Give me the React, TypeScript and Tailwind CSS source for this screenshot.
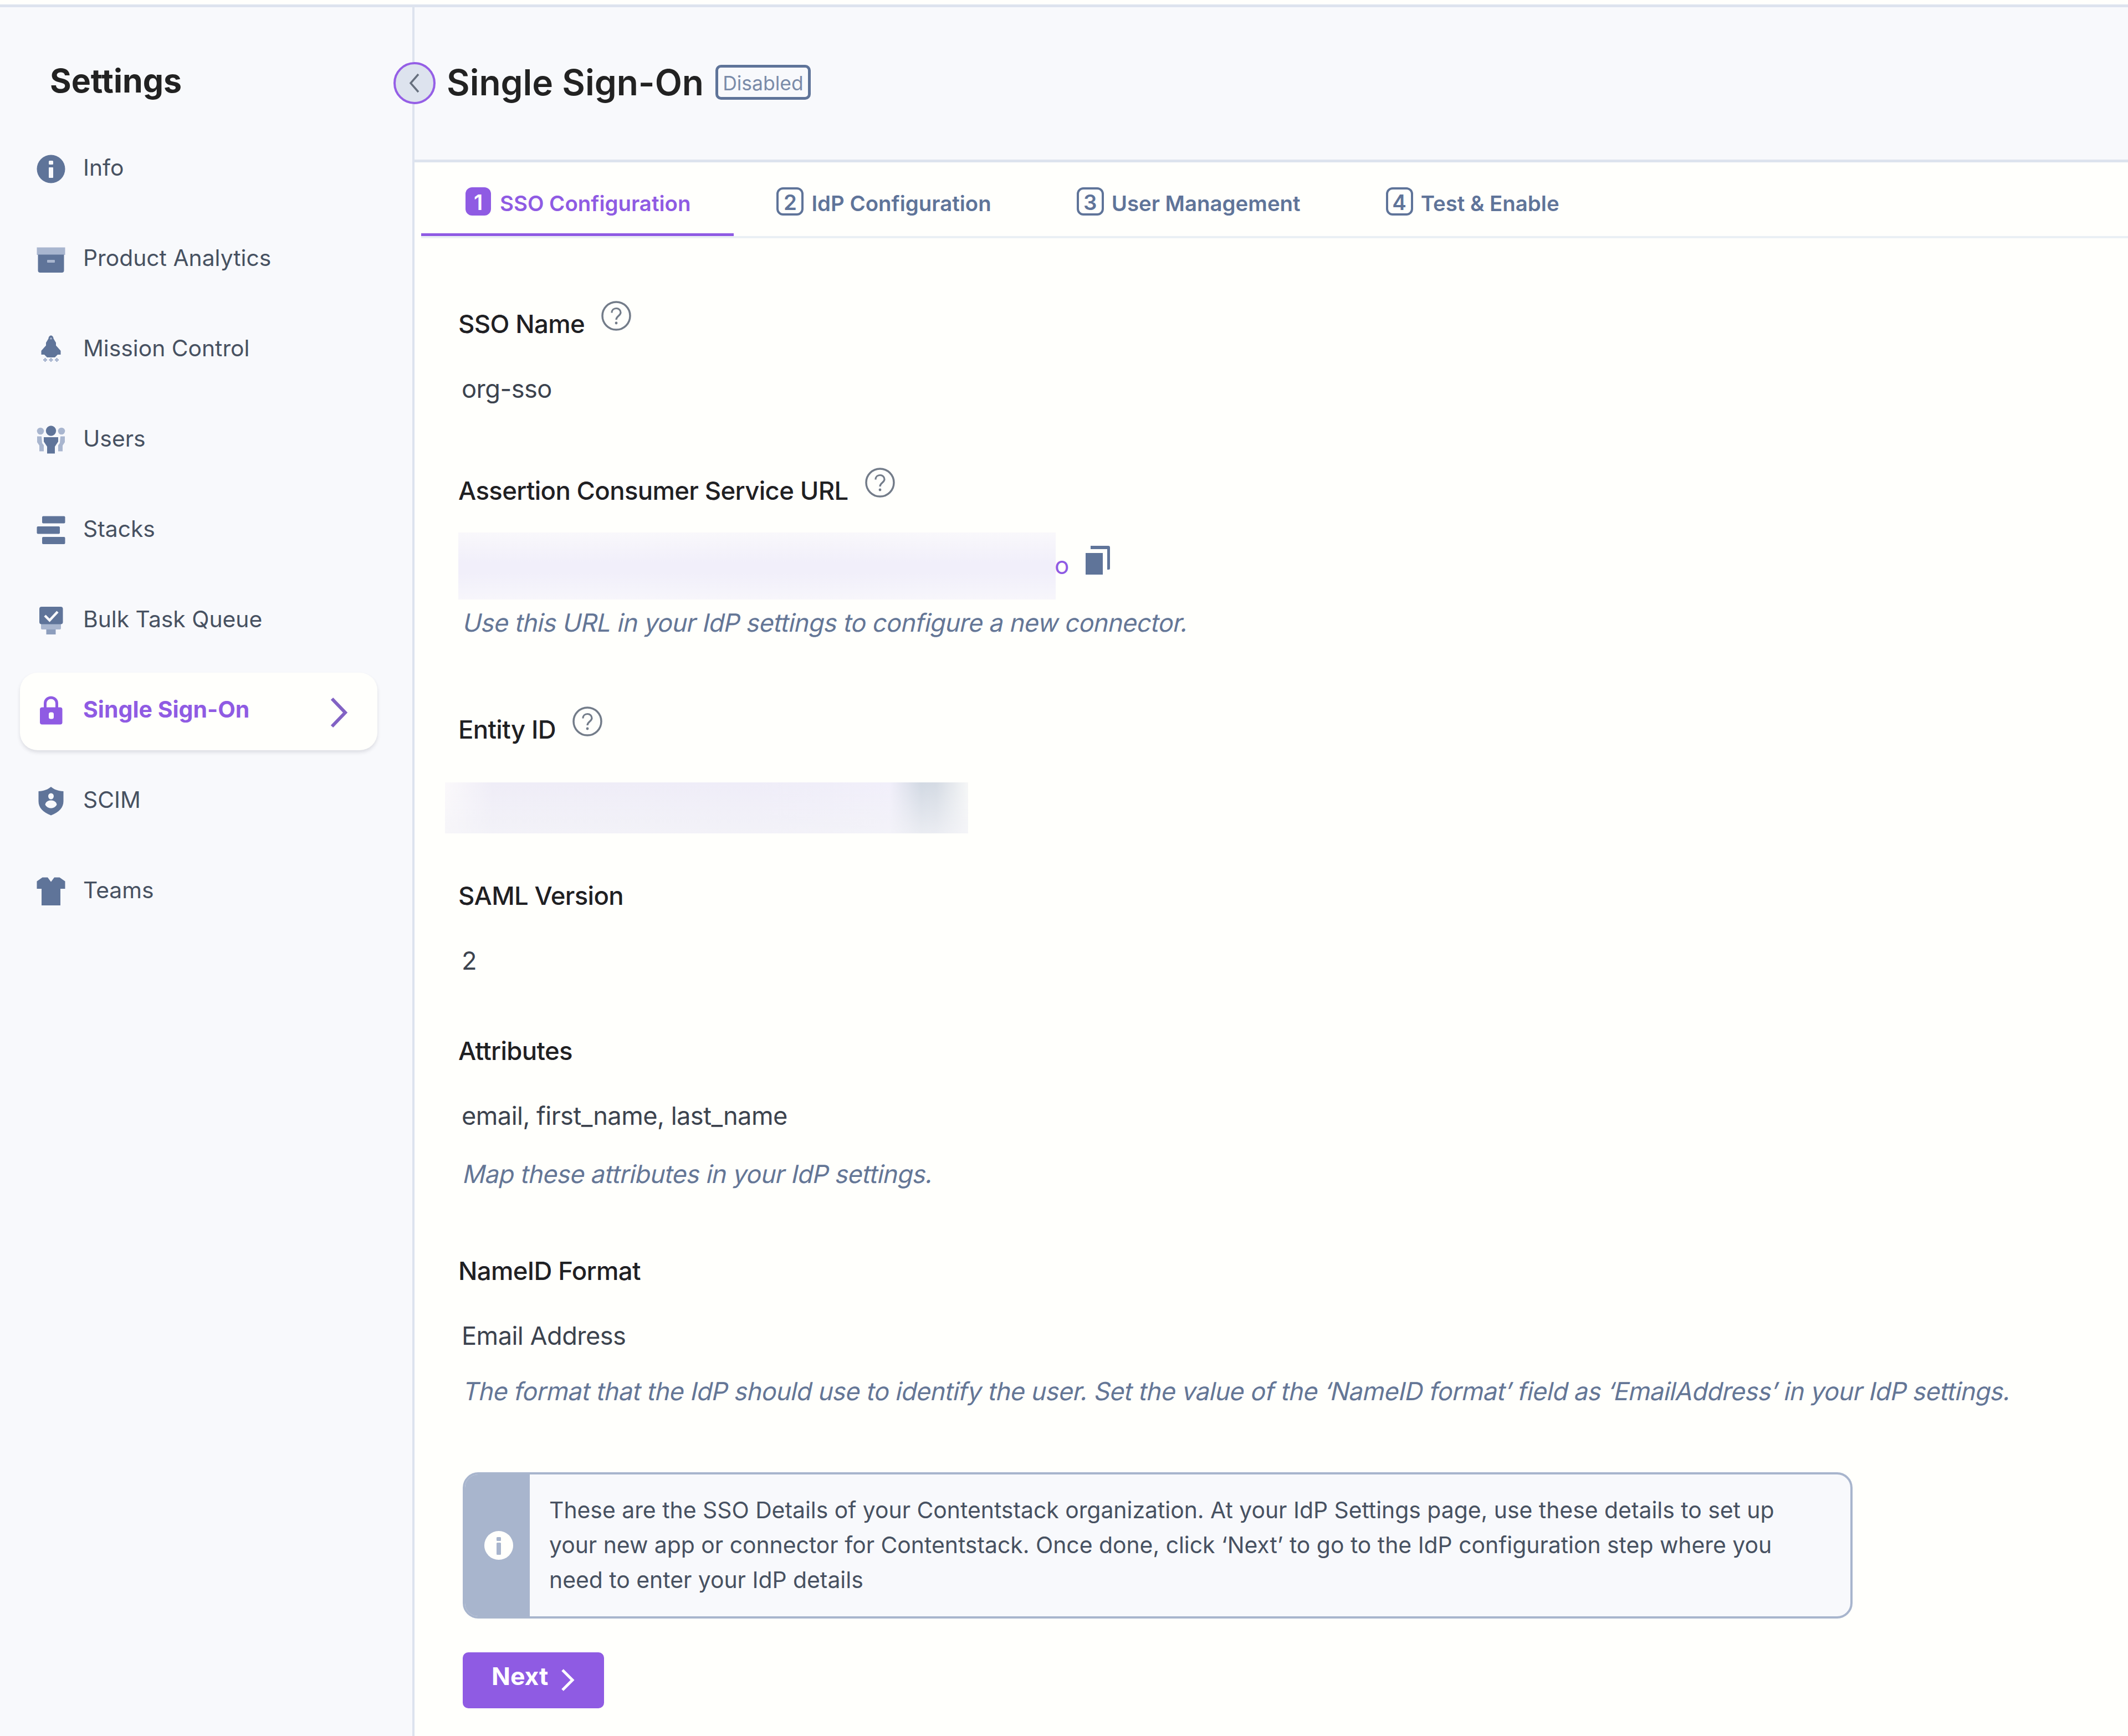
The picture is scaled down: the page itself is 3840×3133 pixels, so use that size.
import { type ReactNode } from 'react'

const slate = '#5f7499'
const pale = '#a9b6cf'

const icons: Record<string, ReactNode> = {
  info: (
    <>
      <circle cx="28" cy="27" r="25.5" fill={slate} />
      <rect x="24" y="12" width="8" height="7" rx="1.5" fill="#f8f9fc" />
      <rect x="24" y="24" width="8" height="19" rx="1" fill="#f8f9fc" />
    </>
  ),
  analytics: (
    <>
      <path d="M2.5 5.5h51V19h-51z" fill={pale} />
      <path d="M4.5 18.5h47V47a4 4 0 0 1-4 4h-39a4 4 0 0 1-4-4z" fill={slate} />
      <rect x="21" y="28" width="14" height="5" rx="1" fill={pale} />
    </>
  ),
  mission: (
    <>
      <path
        d="M28 1.5c2.5 0 4.5 2.5 4.5 5.5l4.500 7.500v5l8.500 9.500v7h-5.500L35 41H21l-5-5h-5.500v-7l8.500-9.500v-5l4.500-7.500c0-3 2-5.500 4.500-5.500z"
        fill={slate}
      />
      <circle cx="28" cy="7" r="1.8" fill={pale} />
      <path d="M17.5 42v7M28 42v7M38.5 42v7M14 45.5h7M24.5 45.5h7M35 45.5h7" stroke={pale} strokeWidth="2.8" />
    </>
  ),
  users: (
    <>
      <circle cx="28" cy="10.5" r="9.2" fill={slate} />
      <path d="M15 22h26v8l-6 9v12.5H21V39l-6-9z" fill={slate} />
      <circle cx="9" cy="11" r="6.3" fill={pale} />
      <circle cx="47" cy="11" r="6.3" fill={pale} />
      <path d="M3 20.5h8l1 12 3 4v11H7V37l-4-6zM53 20.5h-8l-1 12-3 4v11h8V37l4-6z" fill={pale} />
    </>
  ),
  stacks: (
    <>
      <rect x="12" y="1.5" width="41.5" height="13" rx="2" fill={slate} />
      <rect x="2.5" y="20" width="41.5" height="13.5" rx="2" fill={slate} />
      <rect x="12" y="39" width="41.5" height="13" rx="2" fill={slate} />
    </>
  ),
  queue: (
    <>
      <path d="M10 33h36v8a2 2 0 0 1-2 2H12a2 2 0 0 1-2-2z" fill={pale} />
      <rect x="19.5" y="43" width="17" height="9" fill="#8d9ebd" />
      <rect x="7" y="2" width="42.5" height="31.5" rx="4" fill={slate} />
      <path d="m17 18 8.5 8.5L40 11" fill="none" stroke="#f8f9fc" strokeWidth="4.5" />
    </>
  ),
  lock: (
    <>
      <path d="M17.5 23V13a10.5 10 0 0 1 21 0v10" fill="none" stroke="#8f5be3" strokeWidth="5" />
      <rect x="8" y="20.5" width="40.5" height="31" rx="4" fill="#8f5be3" />
      <rect x="24" y="29.5" width="9" height="12" rx="3.5" fill="#fffffc" />
    </>
  ),
  scim: (
    <>
      <path d="M28 1c5 4.5 13 7.5 22.5 8v18c0 11.5-8 20-22.5 25.5C13.5 47 5.5 38.5 5.5 27V9C15 8.5 23 5.5 28 1z" fill={slate} />
      <ellipse cx="28" cy="18" rx="5" ry="5.5" fill="#f8f9fc" />
      <path d="M17.5 33c1-5 5-7.5 10.5-7.5s9.5 2.5 10.5 7.5c-2 4-5.5 6.5-10.5 6.5S19.5 37 17.5 33z" fill="#f8f9fc" />
    </>
  ),
  teams: <path d="M12.5 1.5H22l6 8 6-8h9.5l10 7V22H45v30H11V22H2.5V8.5z" fill={slate} />,
}

const navItems = [
  { label: 'Info', icon: 'info' },
  { label: 'Product Analytics', icon: 'analytics' },
  { label: 'Mission Control', icon: 'mission' },
  { label: 'Users', icon: 'users' },
  { label: 'Stacks', icon: 'stacks' },
  { label: 'Bulk Task Queue', icon: 'queue' },
  { label: 'Single Sign-On', icon: 'lock', active: true },
  { label: 'SCIM', icon: 'scim' },
  { label: 'Teams', icon: 'teams' },
]

const steps = ['SSO Configuration', 'IdP Configuration', 'User Management', 'Test & Enable']

function NavItem({ label, icon, active }: { label: string; icon: string; active?: boolean }) {
  return (
    <a
      className={`flex h-[140px] items-center rounded-[32px] pl-7 pr-[52px] ${
        active
          ? 'bg-[#fffffc] text-[41px] font-bold text-[#8f5be3] shadow-[0_4px_6px_rgba(60,60,80,0.14)]'
          : 'text-[40.8px] text-[#475161]'
      }`}
    >
      <svg viewBox="0 0 56 56" className="size-14 shrink-0">{icons[icon]}</svg>
      <span className="ml-[30px] grow pb-2 leading-[56px]">{label}</span>
      {active && (
        <svg viewBox="0 0 34 56" className="mt-1 h-14 w-[34px]" fill="none" stroke="#8262c4" strokeWidth="6">
          <path d="M4 3l24 25L4 53" />
        </svg>
      )}
    </a>
  )
}

function Sidebar() {
  return (
    <aside className="relative w-[748px] shrink-0 border-r-4 border-[#dde3ee] bg-[#f8f9fc]">
      <h2 className="px-[90px] pt-[97px] text-[59px] leading-[72px] font-bold text-[#222]">Settings</h2>
      <nav className="mt-[54px] flex flex-col gap-[23px] pl-9 pr-[63px]">
        {navItems.map(item => (
          <NavItem key={item.label} {...item} />
        ))}
      </nav>
      {/* collapse toggle sits on the divider */}
      <button className="absolute top-[99px] -right-[42px] z-10 flex size-[76px] items-center justify-center rounded-full border-4 border-[#955fe6] bg-[#dde3ee]">
        <svg viewBox="0 0 20 36" className="h-9 w-5" fill="none" stroke="#67707e" strokeWidth="3.5">
          <path d="M17 2L3 18l14 16" />
        </svg>
      </button>
    </aside>
  )
}

function Steps() {
  return (
    <div className="pl-3">
      <div className="flex h-[137px] border-b-4 border-[#eaf0f4]">
        {steps.map((step, i) => (
          <div
            key={step}
            className={`flex h-[133px] pt-[45px] text-[38.4px] font-semibold ${
              i === 0 ? 'border-b-5 border-[#8f5be3] px-20 pr-[78px] text-[#8f5be3]' : 'px-[77px] text-[#5f7499]'
            }`}
          >
            <span
              className={`flex h-[51px] items-center justify-center rounded-[12px] pt-1 ${
                i === 0 ? 'w-[46px] bg-[#8f5be3] text-white' : 'w-[49px] border-4 border-[#5f7499]'
              }`}
            >
              {i + 1}
            </span>
            <span className={`pt-1 leading-[51px] whitespace-nowrap ${i === 0 ? 'ml-4' : 'ml-[14px]'}`}>{step}</span>
          </div>
        ))}
      </div>
    </div>
  )
}

function HelpIcon() {
  return (
    <svg viewBox="0 0 54 54" className="-mt-[14px] ml-[30px] size-[54px]" fill="none" stroke="#737c89">
      <circle cx="27" cy="27" r="25" strokeWidth="3.5" />
      <path d="M19 21.5c0-5 3.5-8 8-8s8 3 8 7.5c0 6-8 6-8 13" strokeWidth="3.2" />
      <circle cx="27" cy="40" r="2.4" fill="#737c89" stroke="none" />
    </svg>
  )
}

function Label({ children, help }: { children: ReactNode; help?: boolean }) {
  return (
    <div className="flex h-14 items-start">
      <h3 className="text-[45.5px] leading-[56px] font-medium tracking-[-0.65px] text-[#1f2023]">{children}</h3>
      {help && <HelpIcon />}
    </div>
  )
}

function Value({ children }: { children: ReactNode }) {
  return (
    <p className="mt-[61px] pl-[6px] text-[45.2px] leading-[56px] tracking-[-0.55px] text-[#3c434e]">{children}</p>
  )
}

function Hint({ children }: { children: ReactNode }) {
  return (
    <p className="ml-[10px] w-fit -skew-x-12 text-[45px] leading-[56px] tracking-[-0.51px] whitespace-nowrap text-[#647696]">
      {children}
    </p>
  )
}

function CopyIcon() {
  return (
    <svg viewBox="0 0 45 52" className="mt-6 ml-[29px] h-[52px] w-[45px]" fill="#5f7499">
      <path d="M1 13h31v39H1z" />
      <path d="M10 0h32a3 3 0 0 1 3 3v38a2 2 0 0 1-2 2h-3V6H10z" />
    </svg>
  )
}

function Details() {
  return (
    <main className="pt-[127px] pl-[79px]">
      <Label help>SSO Name</Label>
      <Value>org-sso</Value>

      <div className="h-[128px]" />
      <Label help>Assertion Consumer Service URL</Label>
      <div className="mt-[47px] flex h-[121px]">
        <div className="w-[1078px] bg-[linear-gradient(to_bottom,#f9f8fb,#f1effa_45%,#f1effa_60%,#f7f6fb)]" />
        <span className="-ml-0.5 pt-[31px] text-[44px] leading-[56px] text-[#8f5be3]">o</span>
        <CopyIcon />
      </div>
      <div className="h-[14px]" />
      <Hint>Use this URL in your IdP settings to configure a new connector.</Hint>

      <div className="h-[137px]" />
      <Label help>Entity ID</Label>
      <div className="mt-[67px] -ml-6 h-[92px] w-[944px] bg-[linear-gradient(to_bottom,rgba(244,242,250,0),rgba(244,244,248,0.7)),linear-gradient(to_right,#fbf9fb,#efedf7_9%,#efedf8_60%,#f1effa_85%,#d2d9e3_91%,#d5dbe4_94%,#f6f7f7)]" />

      <div className="h-[85px]" />
      <Label>SAML Version</Label>
      <Value>2</Value>

      <div className="h-[107px]" />
      <Label>Attributes</Label>
      <Value>email, first_name, last_name</Value>
      <div className="h-[49px]" />
      <Hint>Map these attributes in your IdP settings.</Hint>

      <div className="h-[119px]" />
      <Label>NameID Format</Label>
      <Value>Email Address</Value>
      <div className="h-[44px]" />
      <Hint>
        The format that the IdP should use to identify the user. Set the value of the ‘NameID format’ field as
        ‘EmailAddress’ in your IdP settings.
      </Hint>

      <div className="mt-[118px] ml-2 flex h-[264px] w-[2508px] overflow-hidden rounded-[28px] border-4 border-[#a8b5cd] bg-[#f8f9fc]">
        <div className="flex w-[117px] shrink-0 items-center justify-center bg-[#a8b5cd]">
          <svg viewBox="0 0 54 54" className="ml-1 size-[54px]">
            <circle cx="27" cy="27" r="26" fill="#fffffc" />
            <rect x="23" y="12" width="8" height="7" rx="1.5" fill="#a8b5cd" />
            <rect x="23" y="22" width="8" height="22" rx="1.5" fill="#a8b5cd" />
          </svg>
        </div>
        <p className="pt-[33px] pl-[35px] text-[40.9px] leading-[63px] tracking-[-0.02px] whitespace-nowrap text-[#475161]">
          These are the SSO Details of your Contentstack organization. At your IdP Settings page, use these details to
          set up
          <br />
          your new app or connector for Contentstack. Once done, click ‘Next’ to go to the IdP configuration step where
          you
          <br />
          need to enter your IdP details
        </p>
      </div>

      <button className="mt-[61px] ml-2 flex h-[101px] w-[255px] items-center rounded-[10px] bg-[#8f5be3] pl-[52px] text-white">
        <span className="pb-4 text-[44.5px] leading-[56px] font-bold">Next</span>
        <svg viewBox="0 0 26 42" className="ml-[23px] h-[42px] w-[26px]" fill="none" stroke="white" strokeWidth="5">
          <path d="M3 2l18 18L3 38" />
        </svg>
      </button>
    </main>
  )
}

export default function App() {
  return (
    <div className="flex h-[3133px] w-[3840px] flex-col overflow-hidden bg-[#fffffc] font-[Inter,sans-serif]">
      <div className="h-[13px] shrink-0 border-b-5 border-[#dde3ee]" />
      <div className="flex grow">
        <Sidebar />
        <div className="min-w-0 grow">
          <header className="flex h-[280px] items-start border-b-5 border-[#dde3ee] bg-[#f8f9fc] pl-[58px]">
            <h1 className="mt-[96px] text-[64px] leading-[80px] font-semibold text-[#222]">Single Sign-On</h1>
            <span className="mt-[104px] ml-[21px] flex h-[63px] w-[172px] items-center justify-center rounded-[10px] border-[5px] border-[#5f7499] pt-1 text-[35.5px] text-[#7a8ba9]">
              Disabled
            </span>
          </header>
          <Steps />
          <Details />
        </div>
      </div>
    </div>
  )
}
